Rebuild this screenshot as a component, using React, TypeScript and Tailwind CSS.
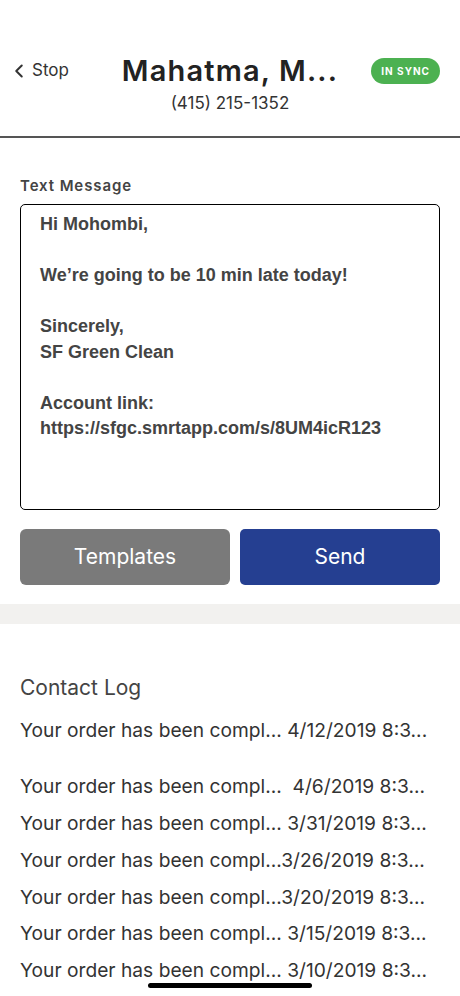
import { ChevronLeft } from 'lucide-react'

const logRows = [
  'Your order has been compl... 4/12/2019 8:3...',
  'Your order has been compl...  4/6/2019 8:3...',
  'Your order has been compl... 3/31/2019 8:3...',
  'Your order has been compl...3/26/2019 8:3...',
  'Your order has been compl...3/20/2019 8:3...',
  'Your order has been compl... 3/15/2019 8:3...',
  'Your order has been compl... 3/10/2019 8:3...',
]

const sf = { fontFamily: 'Inter, "Noto Sans", sans-serif' }

export default function App() {
  return (
    <div className="relative h-[996px] w-[460px] overflow-hidden bg-white" style={sf}>
      {/* header */}
      <div className="h-[51px]" />
      <div className="flex h-[40px] items-center px-[8px]">
        <button className="flex w-[96px] items-center text-[#333]">
          <ChevronLeft size={22} strokeWidth={2.2} />
          <span className="ml-[2px] text-[17px]">Stop</span>
        </button>
        <h1 className="flex-1 text-center text-[29px] font-semibold tracking-[0.04em] text-[#222]">Mahatma, M...</h1>
        <div className="flex w-[96px] justify-end pr-[12px]">
          <span className="rounded-full bg-[#4cb151] px-[10px] py-[7px] text-[10px] font-bold leading-[12px] tracking-[0.1em] text-white">IN SYNC</span>
        </div>
      </div>
      <p className="text-center text-[17px] leading-[24px] text-[#333]">(415) 215-1352</p>
      <div className="mt-[21px] h-[2px] bg-[#555]" />

      {/* message */}
      <div className="px-[20px] pt-[37px]">
        <p className="text-[15px] font-semibold leading-[22px] tracking-[0.06em] text-[#444]">Text Message</p>
        <div
          className="mt-[7px] h-[306px] rounded-[5px] border-[1.5px] border-black px-[19px] pt-[7px] text-[18px] font-bold leading-[25.5px] text-[#444]"
          style={{ fontFamily: '"Liberation Sans", Arial, sans-serif' }}
        >
          <p>Hi Mohombi,</p>
          <p>&nbsp;</p>
          <p>We’re going to be 10 min late today!</p>
          <p>&nbsp;</p>
          <p>Sincerely,</p>
          <p>SF Green Clean</p>
          <p>&nbsp;</p>
          <p>Account link:</p>
          <p>https://sfgc.smrtapp.com/s/8UM4icR123</p>
        </div>
        <div className="mt-[19px] flex gap-[10px]">
          <button className="h-[56px] w-[210px] rounded-[6px] bg-[#7a7a7a] text-[21px] text-white">Templates</button>
          <button className="h-[56px] flex-1 rounded-[5px] bg-[#253f91] text-[21px] text-white">Send</button>
        </div>
      </div>

      <div className="mt-[19px] h-[20px] bg-[#f2f1ef]" />

      {/* contact log */}
      <div className="px-[20px] pt-[48px]">
        <h2 className="text-[21px] text-[#444]">Contact Log</h2>
        <div className="mt-[8px] flex flex-col text-[19.2px] text-[#333]">
          {logRows.map((row, i) => (
            <p key={i} className={`whitespace-pre leading-[36.8px] ${i === 1 ? 'mt-[20px]' : ''}`}>{row}</p>
          ))}
        </div>
      </div>

      <div className="absolute bottom-[8px] left-[148px] h-[5px] w-[164px] rounded-full bg-black" />
    </div>
  )
}
